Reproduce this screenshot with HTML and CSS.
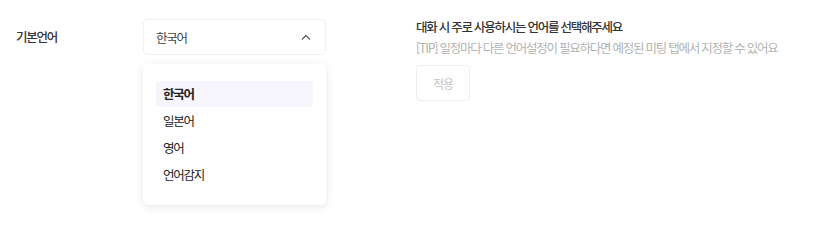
FILE: index.html
```html
<!DOCTYPE html>
<html lang="ko">
<head>
    <meta charset="UTF-8">
    <title>기본언어 설정</title>
    <link rel="stylesheet" href="styles.css">
</head>
<body>

<div class="setting-row">
    <div class="label">기본언어</div>
    <div class="select-wrapper">
        <div class="select">
            <span>한국어</span>
            <svg class="chevron" width="10" height="6" viewBox="0 0 10 6"><path d="M1 5.5 L5 1.5 L9 5.5" fill="none" stroke="#555" stroke-width="1.1"/></svg>
        </div>
        <ul class="options">
            <li class="option selected">한국어</li>
            <li class="option">일본어</li>
            <li class="option">영어</li>
            <li class="option">언어감지</li>
        </ul>
    </div>
    <div class="desc">
        <p class="desc-title">대화 시 주로 사용하시는 언어를 선택해주세요</p>
        <p class="desc-tip">[TIP] 일정마다 다른 언어설정이 필요하다면 예정된 미팅 탭에서 지정할 수 있어요</p>
        <button class="apply" disabled>적용</button>
    </div>
</div>

</body>
</html>
```

FILE: styles.css
```css
html, body {
    height: 100%;
}

body {
    margin: 0;
    background: #fff;
    font-family: "Noto Sans CJK KR", "Noto Sans", sans-serif;
    color: #222;
    letter-spacing: -1.25px;
}

.setting-row {
    display: flex;
    align-items: flex-start;
    min-height: 214px;
    padding: 19px 0 0 16px;
}

.label {
    width: 127px;
    height: 36px;
    line-height: 36px;
    font-size: 12.5px;
    font-weight: 500;
    color: #333;
}

.select-wrapper {
    position: relative;
    width: 183px;
}

.select {
    box-sizing: border-box;
    height: 36px;
    display: flex;
    align-items: center;
    justify-content: space-between;
    padding: 0 14px 0 12px;
    border: 1px solid #f0f0f2;
    border-radius: 4px;
    font-size: 12.5px;
    color: #444;
}

.chevron {
    display: block;
}

.options {
    position: absolute;
    top: 45px;
    left: 0;
    right: 0;
    margin: 0;
    padding: 17px 13px 17px;
    list-style: none;
    background: #fff;
    border-radius: 5px;
    box-shadow: 0 2px 10px rgba(0, 0, 0, 0.1);
}

.option {
    height: 27px;
    line-height: 27px;
    padding: 0 7px;
    font-size: 12.5px;
    color: #222;
    border-radius: 2px;
}

.option.selected {
    background: #f6f5fb;
    font-weight: 700;
    height: 26px;
    line-height: 26px;
}

.desc {
    margin-left: 90px;
}

.desc p {
    margin: 0;
    font-size: 12.5px;
    line-height: 21px;
}

.desc-title {
    margin-top: -3px !important;
    font-weight: 500;
    color: #333;
}

.desc-tip {
    color: #b3b3b3;
}

.apply {
    margin-top: 7px;
    width: 54px;
    height: 36px;
    background: #fff;
    border: 1px solid #eeeeee;
    border-radius: 4px;
    font-family: inherit;
    font-size: 12px;
    letter-spacing: -1px;
    color: #c4c4c4;
}
```
